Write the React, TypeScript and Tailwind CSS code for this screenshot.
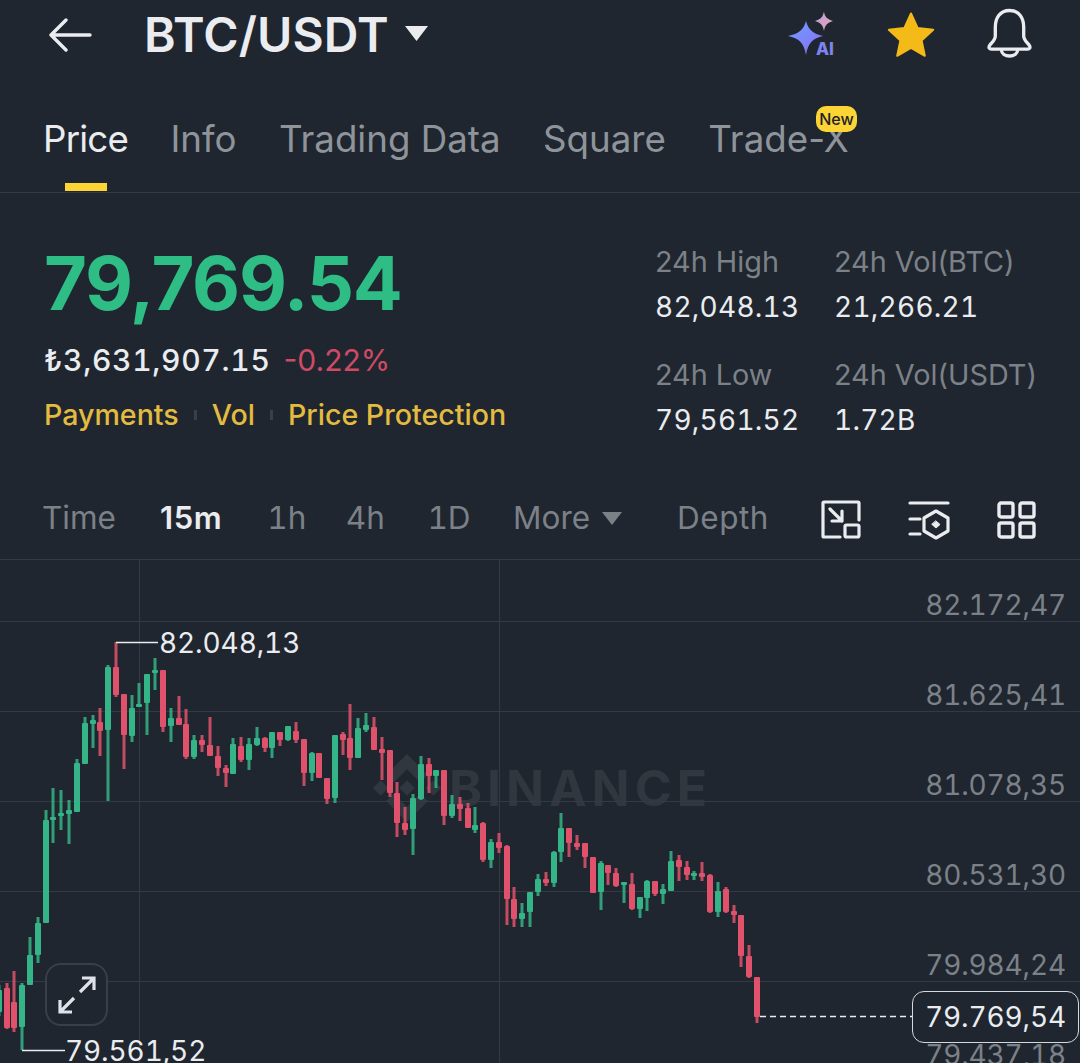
const RED = "#e0526b";
const GREEN = "#35b487";

// x, wick top, body top, body bottom, wick bottom, up?
type Candle = [number, number, number, number, number, boolean];

const candles: Candle[] = [
  [-1, 985, 990, 1012, 1016, true],
  [7, 983, 988, 1028, 1029, false],
  [14, 971, 1002, 1028, 1032, false],
  [22, 983, 985, 1027, 1050, true],
  [30, 937, 955, 985, 985, true],
  [38, 917, 923, 955, 963, true],
  [46, 810, 820, 923, 923, true],
  [53, 788, 817, 820, 843, true],
  [61, 790, 813, 816, 830, true],
  [69, 800, 810, 814, 844, true],
  [77, 759, 763, 812, 812, true],
  [85, 717, 723, 764, 764, true],
  [93, 715, 720, 724, 748, true],
  [100, 708, 722, 731, 756, false],
  [108, 665, 667, 730, 801, true],
  [116, 642, 667, 695, 697, false],
  [124, 694, 694, 735, 769, false],
  [132, 695, 708, 736, 742, true],
  [139, 683, 704, 707, 707, true],
  [147, 674, 674, 703, 735, true],
  [155, 658, 670, 673, 690, true],
  [163, 670, 670, 727, 732, false],
  [171, 708, 718, 726, 742, true],
  [179, 696, 718, 725, 725, false],
  [186, 709, 724, 757, 759, false],
  [194, 735, 740, 757, 759, true],
  [202, 735, 740, 745, 752, false],
  [210, 717, 745, 756, 756, false],
  [218, 746, 756, 768, 776, false],
  [226, 765, 768, 773, 787, false],
  [233, 738, 744, 774, 774, true],
  [241, 737, 746, 760, 762, false],
  [249, 738, 744, 760, 770, true],
  [257, 727, 738, 745, 746, true],
  [265, 737, 738, 748, 752, false],
  [272, 732, 732, 748, 758, true],
  [280, 732, 732, 740, 746, false],
  [288, 726, 726, 740, 741, true],
  [296, 722, 731, 740, 743, false],
  [304, 739, 739, 773, 786, false],
  [312, 752, 753, 773, 781, true],
  [319, 753, 753, 778, 778, false],
  [327, 778, 778, 799, 804, false],
  [335, 735, 735, 798, 803, true],
  [343, 732, 734, 740, 755, false],
  [350, 704, 738, 758, 770, false],
  [358, 718, 728, 758, 758, true],
  [366, 713, 725, 730, 732, true],
  [374, 717, 727, 750, 750, false],
  [382, 737, 749, 753, 780, false],
  [390, 750, 750, 793, 797, false],
  [397, 782, 793, 823, 837, false],
  [405, 807, 823, 830, 835, false],
  [413, 794, 798, 829, 855, true],
  [421, 756, 764, 799, 800, true],
  [429, 758, 764, 776, 793, false],
  [436, 770, 770, 776, 788, true],
  [444, 770, 770, 816, 825, false],
  [452, 795, 804, 816, 818, true],
  [460, 797, 804, 809, 821, false],
  [468, 803, 808, 828, 828, false],
  [475, 807, 825, 830, 833, true],
  [483, 822, 823, 860, 862, false],
  [491, 839, 842, 860, 868, true],
  [499, 833, 842, 848, 853, false],
  [507, 845, 846, 899, 925, false],
  [514, 887, 899, 919, 927, false],
  [522, 903, 913, 919, 927, true],
  [530, 892, 892, 912, 927, true],
  [538, 874, 879, 892, 896, true],
  [546, 872, 879, 883, 886, false],
  [554, 851, 852, 883, 887, true],
  [561, 813, 828, 852, 862, true],
  [569, 828, 828, 843, 857, false],
  [577, 835, 843, 847, 850, false],
  [585, 843, 843, 857, 868, false],
  [593, 857, 857, 893, 893, false],
  [601, 861, 863, 892, 910, true],
  [608, 865, 865, 873, 885, false],
  [616, 868, 873, 886, 887, false],
  [624, 882, 882, 885, 903, true],
  [632, 873, 884, 909, 910, false],
  [640, 897, 897, 909, 918, true],
  [647, 880, 881, 898, 911, true],
  [655, 881, 881, 894, 896, false],
  [663, 884, 889, 894, 904, true],
  [671, 851, 861, 891, 891, true],
  [679, 855, 860, 867, 881, false],
  [687, 861, 867, 875, 880, false],
  [694, 871, 873, 876, 880, true],
  [702, 862, 873, 877, 881, false],
  [710, 874, 875, 912, 913, false],
  [718, 882, 891, 912, 917, true],
  [726, 887, 889, 912, 913, false],
  [734, 905, 911, 915, 923, false],
  [741, 915, 915, 956, 967, false],
  [749, 945, 956, 977, 978, false],
  [757, 977, 977, 1017, 1023, false],
];

const axisLabels = ["82.172,47", "81.625,41", "81.078,35", "80.531,30", "79.984,24", "79.437,18"];

const Header = () => (
  <div className="flex h-[70px] items-center pl-[48px] pr-[47px]">
    <svg width="44" height="34" viewBox="0 0 44 34" fill="none" stroke="#eaecef" strokeWidth="3.4" strokeLinecap="round" strokeLinejoin="round">
      <path d="M42 17H3M18 2 3 17l15 15" />
    </svg>
    <span className="ml-[52px] text-[48px] font-semibold tracking-[0.1px] text-[#eaecef]">BTC/USDT</span>
    <svg className="ml-[15px] mt-[-4px]" width="25" height="17" viewBox="0 0 25 17">
      <path d="M1 1h23L12.5 16z" fill="#eaecef" />
    </svg>
    <div className="ml-auto flex items-center">
      <svg width="50" height="46" viewBox="0 0 50 46">
        <defs>
          <linearGradient id="ai" x1="0" y1="0" x2="1" y2="1">
            <stop offset="0" stopColor="#6ea0ff" />
            <stop offset="1" stopColor="#8a6cf5" />
          </linearGradient>
          <linearGradient id="ai2" x1="0" y1="0" x2="1" y2="1">
            <stop offset="0" stopColor="#b79df2" />
            <stop offset="1" stopColor="#eaa7a0" />
          </linearGradient>
        </defs>
        <path d="M19 9c2 8 7 13 17 15-10 2-15 7-17 19-2-12-7-17-18-19C12 22 17 17 19 9z" fill="url(#ai)" />
        <path d="M37 0c1 5 3 7 9 9-6 2-8 4-9 10-1-6-3-8-9-10 6-2 8-4 9-10z" fill="url(#ai2)" />
        <text x="29" y="43" fontSize="17" fontWeight="800" fontFamily="Inter, sans-serif" fill="#7f83ee">AI</text>
      </svg>
      <svg className="ml-[49px]" width="50" height="48" viewBox="0 0 50 48">
        <path d="M25 2.500 31.600 17l15.600 1.800-11.600 10.600 3.200 15.400L25 37l-13.800 7.800 3.200-15.400L2.800 18.800 18.400 17z" fill="#f3ba18" stroke="#f3ba18" strokeWidth="2" strokeLinejoin="round" />
      </svg>
      <svg className="ml-[50px] mt-[-4px]" width="47" height="50" viewBox="0 0 48 50" fill="none" stroke="#eaecef" strokeWidth="3.400" strokeLinejoin="round" strokeLinecap="round">
        <path d="M24 2C14 2 9.500 10 9.500 19v9c0 4-3 6-6 10-1 2 0 3.500 2 3.500h37c2 0 3-1.500 2-3.500-3-4-6-6-6-10v-9C38.500 10 34 2 24 2z" />
        <path d="M15.500 42c.5 4 4 6.500 8.500 6.500s8-2.500 8.500-6.500" />
      </svg>
    </div>
  </div>
);

const Tabs = () => (
  <div className="flex h-[123px] items-start gap-[42.4px] border-b border-[#333a44] pl-[43px] pt-[47px] text-[36.7px] leading-[44px] text-[#8f949b]">
    <div className="relative tracking-[-0.8px] text-[#eaecef]">
      Price
      <div className="absolute left-[22px] top-[66px] h-[8px] w-[42px] bg-[#fcd535]" />
    </div>
    <div>Info</div>
    <div>Trading Data</div>
    <div>Square</div>
    <div className="relative">
      Trade-X
      <div className="absolute left-[108px] top-[-11px] rounded-[10px] bg-[#fcd535] px-[3px] text-[16px] font-medium leading-[26px] tracking-normal text-[#1e2329]">New</div>
    </div>
  </div>
);

const Stat = ({ label, value }: { label: string; value: string }) => (
  <div className="flex flex-col gap-[13px] whitespace-nowrap">
    <div className="text-[28.8px] leading-[32px] text-[#7c8188]">{label}</div>
    <div className="text-[28px] leading-[32px] tracking-[0.25px] text-[#eaecef] tabular-nums">{value}</div>
  </div>
);

const Summary = () => (
  <div className="flex h-[277px] pl-[44px] pr-[44px]">
    <div className="flex flex-col">
      <div className="mt-[40px] text-[74px] font-bold leading-[100px] tracking-[-1.2px] text-[#2ebd85]">79,769.54</div>
      <div className="mt-[9px] flex items-center gap-[13px] text-[30px] font-medium leading-[36px]">
        <span className="tracking-[0.7px] text-[#eaecef] tabular-nums">₺3,631,907.15</span>
        <span className="font-normal text-[#cf4a64]">-0.22%</span>
      </div>
      <div className="mt-[19px] flex items-center text-[28.6px] font-medium leading-[36px] text-[#e3bb40]">
        <span>Payments</span>
        <span className="mx-[15px] h-[10px] w-[3px] bg-[#3a4049]" />
        <span>Vol</span>
        <span className="mx-[15px] h-[10px] w-[3px] bg-[#3a4049]" />
        <span>Price Protection</span>
      </div>
    </div>
    <div className="ml-auto mt-[53px] grid w-[381px] grid-cols-[179px_1fr] gap-y-[36px] self-start">
      <Stat label="24h High" value="82,048.13" />
      <Stat label="24h Vol(BTC)" value="21,266.21" />
      <Stat label="24h Low" value="79,561.52" />
      <Stat label="24h Vol(USDT)" value="1.72B" />
    </div>
  </div>
);

const Toolbar = () => (
  <div className="flex h-[90px] items-start border-b border-[#333a44] pl-[42px] pr-[44px] pt-[30px] text-[31.5px] leading-[36px] text-[#7c8188]">
    <div className="flex items-center gap-[42.5px]">
      <span className="mr-[1.500px]">Time</span>
      <span className="mr-[2.500px] text-[31px] font-semibold tracking-[0.6px] text-[#eaecef]">15m</span>
      <span className="mr-[-3px] tabular-nums">1h</span>
      <span className="tabular-nums">4h</span>
      <span className="tabular-nums">1D</span>
      <span className="flex items-center gap-[12px]">
        More
        <svg width="20" height="13" viewBox="0 0 20 13">
          <path d="M0 0h20L10 13z" fill="#7c8188" />
        </svg>
      </span>
    </div>
    <span className="ml-[55px] tracking-[0.5px]">Depth</span>
    <div className="ml-auto flex items-center gap-[47px]">
      <svg width="40" height="40" viewBox="0 0 40 40" fill="none" stroke="#eaecef" strokeWidth="3.200" strokeLinecap="round" strokeLinejoin="round">
        <path d="M19 37H3a1 1 0 0 1-1-1V3a1 1 0 0 1 1-1h34a1 1 0 0 1 1 1v17" />
        <rect x="24" y="25" width="14" height="12" rx="1.500" />
        <path d="M9 9l12 12M21 11v10H11" />
      </svg>
      <svg width="42" height="40" viewBox="0 0 42 40" fill="none" stroke="#eaecef" strokeWidth="3.200" strokeLinecap="round" strokeLinejoin="round">
        <path d="M2 3h38M2 19h10M2 34h10" />
        <path d="M28 11l12 7v13l-12 7-12-7V18z" />
        <path d="M28 21l4 3.500-4 3.500-4-3.500z" fill="#eaecef" strokeWidth="1" />
      </svg>
      <svg width="39" height="38" viewBox="0 0 39 38" fill="none" stroke="#eaecef" strokeWidth="3.400" strokeLinejoin="round">
        <rect x="2" y="2" width="14" height="14" rx="2" />
        <rect x="23" y="2" width="14" height="14" rx="2" />
        <rect x="2" y="22" width="14" height="14" rx="2" />
        <rect x="23" y="22" width="14" height="14" rx="2" />
      </svg>
    </div>
  </div>
);

const Chart = () => (
  <div className="relative h-[503px] overflow-hidden">
    <div className="absolute left-[373px] top-[194px] flex items-center gap-[8px] text-[#30373f]">
      <svg width="68" height="68" viewBox="0 0 126.61 126.61" fill="currentColor">
        <path d="M38.73 53.2l24.59-24.58 24.6 24.6 14.3-14.31L63.32 0 24.43 38.9z" />
        <path d="M0 63.31l14.3-14.31 14.31 14.31-14.31 14.3z" />
        <path d="M38.73 73.41l24.59 24.59 24.6-24.6 14.31 14.29-38.9 38.91-38.91-38.88z" />
        <path d="M98 63.31l14.3-14.31 14.31 14.3-14.31 14.32z" />
        <path d="M77.83 63.3L63.32 48.78 52.59 59.51l-1.24 1.23-2.54 2.54 14.51 14.5 14.51-14.47z" />
      </svg>
      <span className="text-[50px] font-bold leading-[68px] tracking-[5px]">BINANCE</span>
    </div>
    <svg className="absolute left-0 top-0" width="1080" height="503" viewBox="0 560 1080 503" fill="none">
      {[621, 711, 801, 891, 981].map((y) => (
        <path key={y} d={`M0 ${y + 0.5}H1080`} stroke="#333a44" />
      ))}
      {[139, 499].map((x) => (
        <path key={x} d={`M${x + 0.5} 560V1063`} stroke="#333a44" />
      ))}
      {candles.map(([x, wt, bt, bb, wb, up]) => (
        <g key={x} fill={up ? GREEN : RED}>
          <rect x={x - 1.5} y={wt} width="3" height={wb - wt} opacity="0.85" />
          <rect x={x - 3} y={bt} width="6" height={Math.max(bb - bt, 3)} rx="1" />
        </g>
      ))}
      <path d="M116 642.500H158M22 1050.500H65" stroke="#eaecef" strokeWidth="1.500" />
      <path d="M760 1016.500H912" stroke="#eaecef" strokeWidth="1.500" strokeDasharray="6 4" />
    </svg>
    <span className="absolute left-[159px] top-[65px] text-[28px] leading-[36px] tracking-[-0.1px] text-[#eaecef] tabular-nums">82.048,13</span>
    <span className="absolute left-[65px] top-[473px] text-[28px] leading-[36px] tracking-[-0.1px] text-[#eaecef] tabular-nums">79.561,52</span>
    <div className="absolute right-[14px] top-0 flex flex-col items-end text-[28px] leading-[90px] tracking-[-0.15px] text-[#7c8188] tabular-nums">
      {axisLabels.map((l) => (
        <span key={l}>{l}</span>
      ))}
    </div>
    <div className="absolute left-[912px] top-[431px] flex h-[52px] w-[167px] items-center justify-center rounded-[12px] border-[1.500px] border-[#d5d8dc] bg-[#1f262f] text-[28px] tracking-[-0.1px] text-[#eaecef] tabular-nums">
      79.769,54
    </div>
    <div className="absolute left-[45px] top-[403px] flex h-[63px] w-[63px] items-center justify-center rounded-[16px] border-2 border-[#383f49] bg-[#1f262f]">
      <svg width="40" height="40" viewBox="0 0 40 40" fill="none" stroke="#dfe2e6" strokeWidth="3.200" strokeLinejoin="miter">
        <path d="M23 17 37 3M25 3h12v12" />
        <path d="M17 23 3 37M15 37H3V25" />
      </svg>
    </div>
  </div>
);

export default function App() {
  return (
    <div className="h-[1063px] w-[1080px] overflow-hidden bg-[#1f262f] font-['Inter',sans-serif]">
      <Header />
      <Tabs />
      <Summary />
      <Toolbar />
      <Chart />
    </div>
  );
}
